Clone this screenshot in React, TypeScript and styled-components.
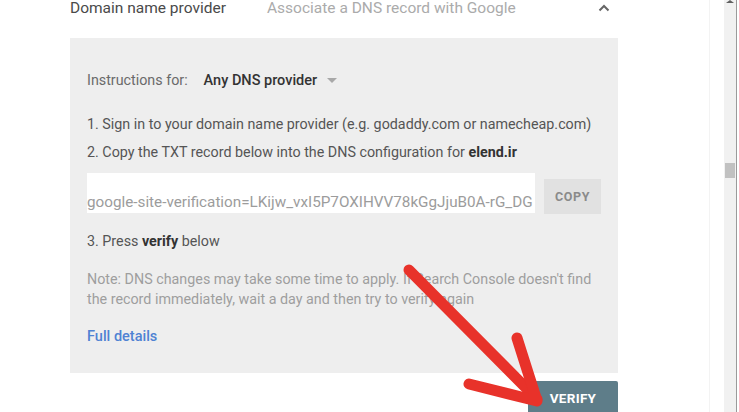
import React from "react";
import styled, { createGlobalStyle } from "styled-components";

const Global = createGlobalStyle`
  html, body { margin: 0; padding: 0; background: #ffffff; overflow: hidden; }
  body { font-family: Roboto, "Noto Sans", Arial, sans-serif; }
  #root { width: 739px; height: 412px; }
`;

const Page = styled.div`
  width: 739px;
  height: 412px;
  display: flex;
  position: relative;
  overflow: hidden;
  background: #fff;
`;

const Content = styled.div`
  width: 710px;
  border-right: 1px solid #f3f3f3;
  padding-left: 70px;
  box-sizing: border-box;
  display: flex;
  flex-direction: column;
  & > * { flex-shrink: 0; }
`;

const Gutter = styled.div`
  width: 14px;
`;

const ScrollTrack = styled.div`
  width: 13px;
  background: #f1f1f1;
  border-right: 1px solid #9a9a9a;
  box-sizing: border-box;
  display: flex;
  flex-direction: column;
  align-items: center;
`;

const ScrollArrow = styled.div`
  width: 0;
  height: 0;
  border-left: 4px solid transparent;
  border-right: 4px solid transparent;
  border-bottom: 3px solid #606060;
`;

const ScrollThumb = styled.div`
  margin-top: 160px;
  width: 10px;
  height: 15px;
  background: #c1c1c1;
`;

const HeaderRow = styled.div`
  width: 548px;
  height: 39px;
  display: flex;
  align-items: flex-start;
  line-height: 18px;
  margin-top: -1px;
`;

const HeaderLabel = styled.div`
  width: 197px;
  font-size: 15.5px;
  color: #4a4a4a;
`;

const HeaderDesc = styled.div`
  flex: 1;
  font-size: 15.5px;
  color: #ababab;
`;

const Chevron = styled.svg`
  width: 12px;
  height: 8px;
  margin: 5px 8px 0 0;
`;

const Panel = styled.div`
  width: 548px;
  background: #eeeeee;
  padding: 32px 17px 26px 17px;
  box-sizing: border-box;
  display: flex;
  flex-direction: column;
`;

const InstrRow = styled.div`
  display: flex;
  align-items: center;
  height: 20px;
  font-size: 14.3px;
  color: #6a6a6a;
`;

const InstrValue = styled.span`
  margin-left: 16px;
  font-weight: 500;
  color: #333;
  font-size: 14.5px;
`;

const Caret = styled.span`
  margin-left: 10px;
  width: 0;
  height: 0;
  border-left: 5px solid transparent;
  border-right: 5px solid transparent;
  border-top: 5px solid #a8a8a8;
`;

const Step = styled.div<{ $mt: number }>`
  margin-top: ${(p) => p.$mt}px;
  font-size: 14.3px;
  line-height: 20px;
  color: #555;
  b { font-weight: 700; color: #333; }
`;

const InputRow = styled.div`
  margin-top: 10px;
  display: flex;
  align-items: flex-end;
  gap: 9px;
  height: 41px;
`;

const TokenInput = styled.input`
  width: 449px;
  height: 40px;
  box-sizing: border-box;
  border: none;
  outline: none;
  background: #fff;
  padding: 18px 0 0 0;
  font-family: Roboto, Arial, sans-serif;
  font-size: 15.25px;
  color: #9c9c9c;
`;

const CopyButton = styled.button`
  width: 57px;
  height: 35px;
  border: none;
  background: #e1e1e1;
  color: #8a8a8a;
  font-family: Roboto, Arial, sans-serif;
  font-weight: 700;
  font-size: 12.5px;
  letter-spacing: 0.6px;
  padding: 0;
  margin-bottom: -1px;
`;

const Note = styled.div`
  margin-top: 18px;
  font-size: 14.3px;
  line-height: 20px;
  color: #9e9e9e;
`;

const Link = styled.a`
  margin-top: 18px;
  font-size: 14.5px;
  line-height: 20px;
  font-weight: 500;
  color: #4f82d3;
  text-decoration: none;
`;

const Footer = styled.div`
  width: 548px;
  display: flex;
  justify-content: flex-end;
  margin-top: 8px;
`;

const VerifyButton = styled.button`
  width: 90px;
  height: 36px;
  border: none;
  border-radius: 2px;
  background: #5e7d89;
  color: #fff;
  font-family: Roboto, Arial, sans-serif;
  font-weight: 700;
  font-size: 13.5px;
  letter-spacing: 0.3px;
  padding: 0;
  padding-bottom: 2px;
`;

const ArrowOverlay = styled.svg`
  position: absolute;
  left: 0;
  top: 0;
  pointer-events: none;
`;

export default function App() {
  return (
    <>
      <Global />
      <Page>
        <Content>
          <HeaderRow>
            <HeaderLabel>Domain name provider</HeaderLabel>
            <HeaderDesc>Associate a DNS record with Google</HeaderDesc>
            <Chevron viewBox="0 0 12 8">
              <path d="M1.5 6.5 L6 2 L10.5 6.5" fill="none" stroke="#666" strokeWidth="2" />
            </Chevron>
          </HeaderRow>
          <Panel>
            <InstrRow>
              Instructions for:
              <InstrValue>Any DNS provider</InstrValue>
              <Caret />
            </InstrRow>
            <Step $mt={24}>1. Sign in to your domain name provider (e.g. godaddy.com or namecheap.com)</Step>
            <Step $mt={8}>
              2. Copy the TXT record below into the DNS configuration for <b>elend.ir</b>
            </Step>
            <InputRow>
              <TokenInput readOnly value="google-site-verification=LKijw_vxI5P7OXIHVV78kGgJjuB0A-rG_DG" />
              <CopyButton>COPY</CopyButton>
            </InputRow>
            <Step $mt={18}>
              3. Press <b>verify</b> below
            </Step>
            <Note>
              Note: DNS changes may take some time to apply. If Search Console doesn't find
              <br />
              the record immediately, wait a day and then try to verify again
            </Note>
            <Link href="#">Full details</Link>
          </Panel>
          <Footer>
            <VerifyButton>VERIFY</VerifyButton>
          </Footer>
        </Content>
        <Gutter />
        <ScrollTrack>
          <ScrollArrow />
          <ScrollThumb />
        </ScrollTrack>
        <ArrowOverlay width="739" height="412" viewBox="0 0 739 412">
          <g stroke="#e8322a" strokeWidth="11" strokeLinecap="round" fill="none">
            <path d="M409 270 L537 399" />
            <path d="M517 338 L537 401 L469 384" strokeLinejoin="round" />
          </g>
        </ArrowOverlay>
      </Page>
    </>
  );
}
